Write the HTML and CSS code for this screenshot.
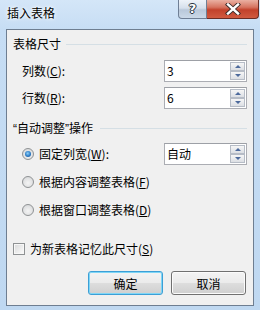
FILE: index.html
```html
<!DOCTYPE html>
<html lang="zh-CN">
<head>
  <meta charset="UTF-8">
  <title>插入表格</title>
  <link rel="stylesheet" href="styles.css">
</head>
<body>
  <div class="window">
    <div class="titlebar">
      <span class="title">插入表格</span>
      <div class="controls">
        <div class="btn-help">?</div>
        <div class="btn-close">
          <svg width="18" height="12" viewBox="0 0 18 12">
            <path d="M4 1.5 L14 10.5 M14 1.5 L4 10.5" stroke="#3a2a28" stroke-width="4.2" stroke-linecap="square"/>
            <path d="M4 1.5 L14 10.5 M14 1.5 L4 10.5" stroke="#ffffff" stroke-width="2.4" stroke-linecap="square"/>
          </svg>
        </div>
      </div>
    </div>

    <div class="client">
      <div class="group-head head-size"><span>表格尺寸</span><i class="rule"></i></div>

      <div class="row row-cols">
        <span class="label">列数(<u>C</u>):</span>
        <div class="spin"><span class="val">3</span><div class="arrows"><b class="up"></b><b class="down"></b></div></div>
      </div>
      <div class="row row-rows">
        <span class="label">行数(<u>R</u>):</span>
        <div class="spin"><span class="val">6</span><div class="arrows"><b class="up"></b><b class="down"></b></div></div>
      </div>

      <div class="group-head head-auto"><span><span class="q">“</span>自动调整<span class="q">”</span>操作</span><i class="rule"></i></div>

      <div class="row radio-row first-radio">
        <i class="radio checked"></i>
        <span class="label">固定列宽(<u>W</u>):</span>
        <div class="spin"><span class="val">自动</span><div class="arrows"><b class="up"></b><b class="down"></b></div></div>
      </div>
      <div class="row radio-row">
        <i class="radio"></i>
        <span class="label">根据内容调整表格(<u>F</u>)</span>
      </div>
      <div class="row radio-row">
        <i class="radio"></i>
        <span class="label">根据窗口调整表格(<u>D</u>)</span>
      </div>

      <div class="row check-row">
        <i class="check"></i>
        <span class="label">为新表格记忆此尺寸(<u>S</u>)</span>
      </div>

      <div class="buttons">
        <button class="focused">确定</button>
        <button>取消</button>
      </div>
    </div>
  </div>
</body>
</html>
```

FILE: styles.css
```css
body {
  margin: 0;
  font-family: "Noto Sans CJK SC", "Noto Sans", sans-serif;
  font-size: 12px;
  color: #000;
}

.window {
  width: 260px;
  height: 310px;
  display: flex;
  flex-direction: column;
  background: linear-gradient(to bottom, #d4e6f8 0, #c6ddf4 30px, #bfd8f1 100%);
  overflow: hidden;
}

/* Title bar */
.titlebar {
  height: 29px;
  display: flex;
  align-items: flex-start;
  flex-shrink: 0;
}

.title {
  padding: 5px 0 0 7px;
  line-height: 16px;
  text-shadow: 0 0 5px #fff, 0 0 3px #fff;
}

.controls {
  margin-left: auto;
  margin-right: 1px;
  display: flex;
}

.btn-help {
  width: 27px;
  height: 18px;
  border: 1px solid #6f7f95;
  border-top: none;
  border-radius: 0 0 0 4px;
  background: linear-gradient(to bottom, #eef3f9 0, #d6e0ec 45%, #b9c8da 55%, #cbd9e8 100%);
  color: #fff;
  font-family: "DejaVu Sans", sans-serif;
  font-weight: bold;
  font-size: 13px;
  line-height: 17px;
  text-align: center;
  text-shadow: 0 0 1px #2a3440, 1px 0 0 #2a3440, -1px 0 0 #2a3440, 0 1px 0 #2a3440, 0 -1px 0 #2a3440;
}

.btn-close {
  width: 51px;
  height: 18px;
  border: 1px solid #6a2c24;
  border-top: none;
  border-left: none;
  border-radius: 0 0 4px 0;
  background: linear-gradient(to bottom, #eab0a2 0, #d67460 40%, #c2412b 55%, #d05a40 100%);
  display: flex;
  align-items: center;
  justify-content: center;
}

/* Client area */
.client {
  margin: 0 6px 4px;
  height: 277px;
  box-sizing: border-box;
  border: 1px solid #6e7e91;
  background: #f0f0f0;
  padding: 0 6px 0 6px;
  display: flex;
  flex-direction: column;
}

.group-head {
  height: 16px;
  display: flex;
  align-items: center;
  line-height: 16px;
}

.group-head .rule {
  flex: 1;
  margin-left: 5px;
  border-top: 1px solid #d5dfe5;
  height: 0;
}

.group-head .q {
  font-family: "Liberation Sans", sans-serif;
}

.head-size {
  margin-top: 6px;
}

.head-auto {
  margin-top: 11px;
}

.head-auto .rule {
  margin-left: 7px;
}

.row {
  height: 22px;
  display: flex;
  align-items: center;
  padding-left: 9px;
}

.row-cols {
  margin-top: 8px;
}

.row-rows {
  margin-top: 5px;
}

.radio-row {
  margin-top: 6px;
}

.radio-row.first-radio {
  margin-top: 7px;
}

.check-row {
  margin-top: 17px;
  padding-left: 0;
}

.label {
  line-height: 16px;
  white-space: nowrap;
}

/* Spin box */
.spin {
  margin-left: auto;
  width: 83px;
  height: 22px;
  box-sizing: border-box;
  border: 1px solid #abadb3;
  border-top-color: #9da0a6;
  background: #fff;
  display: flex;
  align-items: center;
}

.spin .val {
  padding-left: 2px;
  line-height: 16px;
}

.arrows {
  margin-left: auto;
  margin-right: 1px;
  display: flex;
  flex-direction: column;
}

.arrows b {
  width: 15px;
  height: 9px;
  box-sizing: border-box;
  border: 1px solid #b6bcc6;
  background: linear-gradient(to bottom, #f6f6f6, #dcdfe4);
  position: relative;
}

.arrows b::after {
  content: "";
  position: absolute;
  left: 4px;
  top: 2px;
  border-left: 3px solid transparent;
  border-right: 3px solid transparent;
}

.arrows .up::after {
  border-bottom: 3px solid #4d6a9c;
}

.arrows .down::after {
  border-top: 3px solid #4d6a9c;
}

/* Radio and check */
.radio {
  width: 12px;
  height: 12px;
  box-sizing: border-box;
  border-radius: 50%;
  border: 1px solid #8f9294;
  background: radial-gradient(circle at 50% 60%, #f4f4f4 0, #e2e3e4 55%, #cfd1d2 100%);
  margin-right: 5px;
  flex-shrink: 0;
  position: relative;
}

.radio.checked::after {
  content: "";
  position: absolute;
  left: 2px;
  top: 2px;
  width: 6px;
  height: 6px;
  border-radius: 50%;
  background: radial-gradient(circle at 45% 40%, #8fd0f7 0, #2b7cc7 55%, #16457e 100%);
}

.check {
  width: 12px;
  height: 12px;
  box-sizing: border-box;
  border: 1px solid #8f9294;
  background: linear-gradient(135deg, #d7d8d9 0, #f2f2f2 70%, #fdfdfd 100%);
  box-shadow: inset 0 0 0 1px #f7f7f7;
  margin-right: 5px;
  flex-shrink: 0;
}

/* Buttons */
.buttons {
  margin-top: 11px;
  display: flex;
  justify-content: flex-end;
  gap: 8px;
  padding-right: 1px;
}

button {
  width: 75px;
  height: 24px;
  font-family: inherit;
  font-size: 12px;
  padding: 0;
  border: 1px solid #707070;
  border-radius: 3px;
  background: linear-gradient(to bottom, #f3f3f3 0, #ebebeb 48%, #dddddd 52%, #cfcfcf 100%);
  box-shadow: inset 0 0 0 1px #fbfbfb;
  color: #000;
}

button.focused {
  border-color: #3c9fd6;
  box-shadow: inset 0 0 0 1px #7fd6f6;
}
```
